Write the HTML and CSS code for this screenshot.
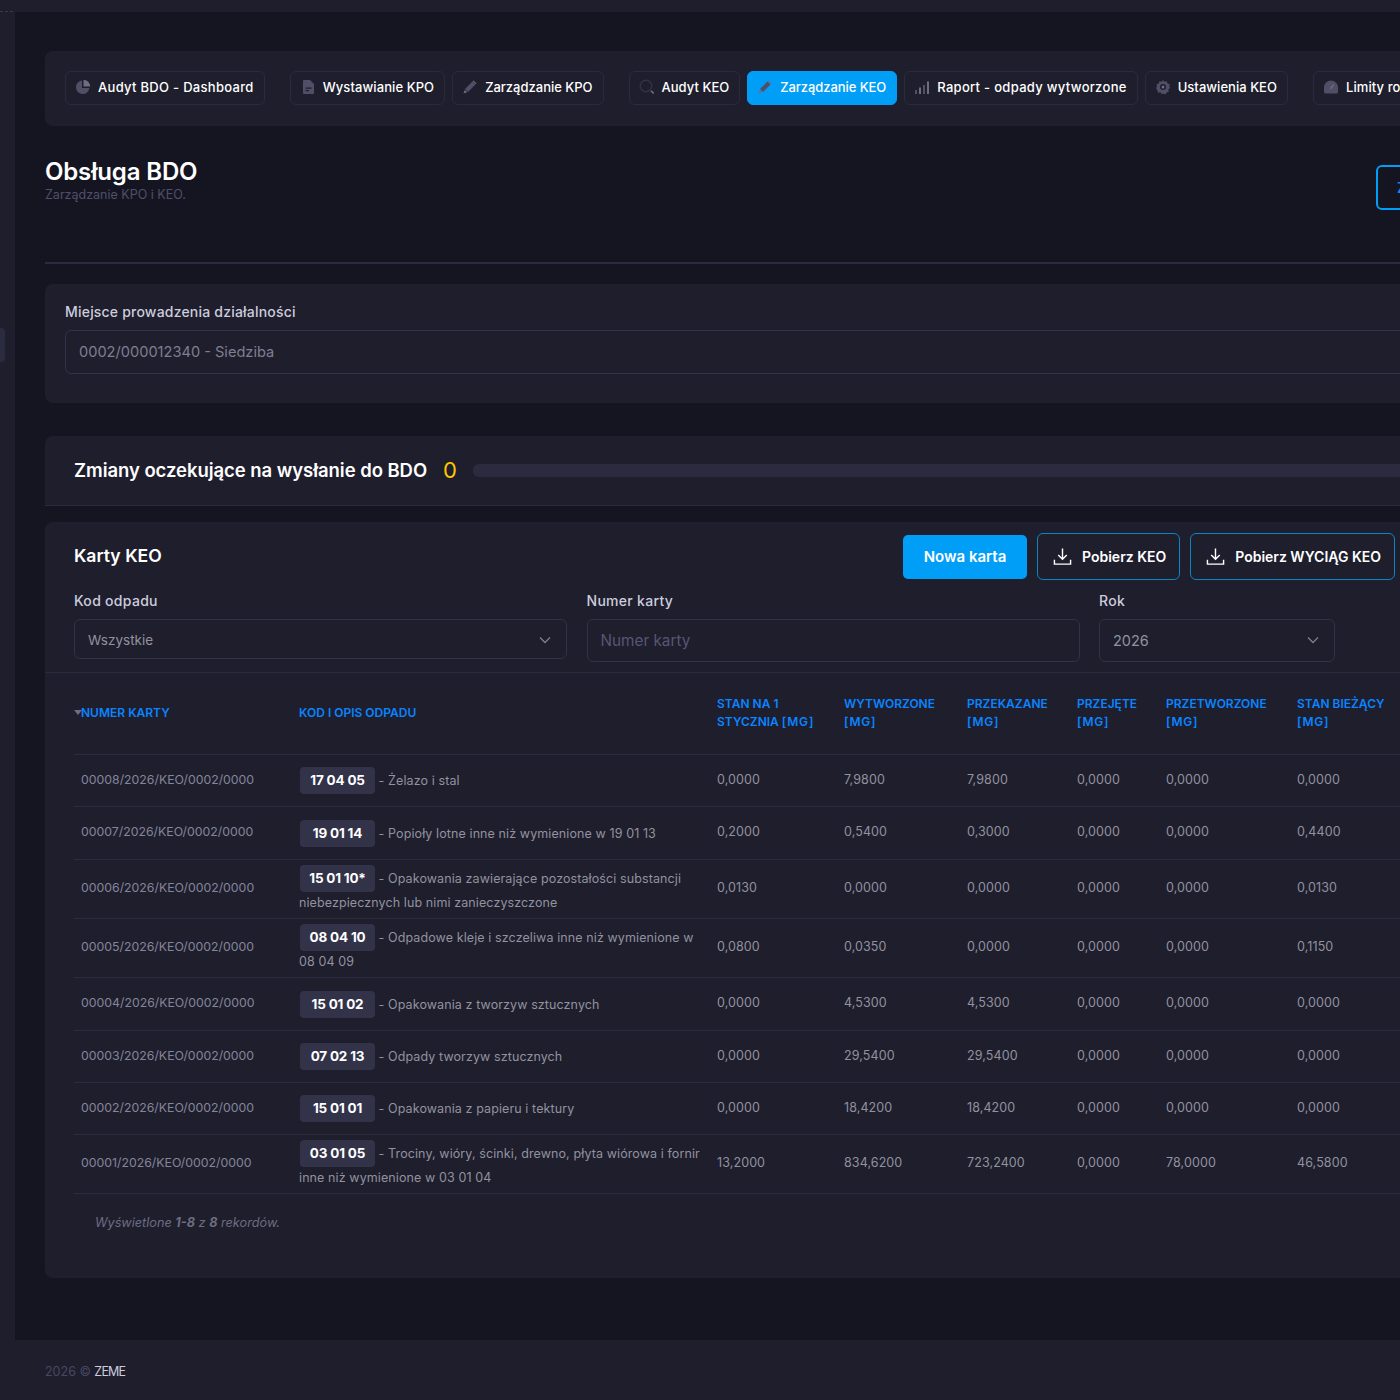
FILE: index.html
```html
<!DOCTYPE html>
<html lang="pl">
<head>
  <meta charset="UTF-8">
  <title>Obsługa BDO</title>
  <link rel="stylesheet" href="styles.css">
</head>
<body>
  <div class="topbar"><div class="topbar-dash"></div></div>
  <div class="layout">
    <aside class="sidebar"><div class="sidebar-tab"></div></aside>
    <div class="page">
      <main class="content">

        <!-- nav -->
        <nav class="nav-card">
          <a class="nav-btn wide">
            <svg class="ico" viewBox="0 0 16 16"><path d="M7 1.500a6.800 6.800 0 1 0 7.500 7.500H7z"/><path class="hi" d="M8.500 .8v6.700h6.700A6.800 6.800 0 0 0 8.500 .8z"/></svg>
            Audyt BDO - Dashboard
          </a>
          <a class="nav-btn gap-l">
            <svg class="ico" viewBox="0 0 16 16"><path d="M3 2a1 1 0 0 1 1-1h6l4 4v9a1 1 0 0 1-1 1H4a1 1 0 0 1-1-1z"/><path class="dk" d="M5.500 8.500h6v1.300h-6zM5.500 11h3.500v1.300h-3.500z"/></svg>
            Wystawianie KPO
          </a>
          <a class="nav-btn tight">
            <svg class="ico" viewBox="0 0 16 16"><path d="M10.500 2.500l3 3-7.500 7.500-3-3z"/><path class="hi" d="M11.500 1.500l3 3-.8.800-3-3zM2.800 10.800l2.400 2.400-3.700 1.300z"/></svg>
            Zarządzanie KPO
          </a>
          <a class="nav-btn gap-l snug">
            <svg class="ico" viewBox="0 0 16 16"><circle class="ring" cx="7" cy="7" r="5.800"/><path class="hi" d="M11.500 12.500l1.200-1.200 2.600 2.600-1.200 1.200z"/></svg>
            Audyt KEO
          </a>
          <a class="nav-btn active tight">
            <svg class="ico" viewBox="0 0 16 16"><path d="M10.500 2.500l3 3-7.500 7.500-3-3z"/><path class="hi" d="M11.500 1.500l3 3-.8.800-3-3zM2.800 10.800l2.400 2.400-3.700 1.300z"/></svg>
            Zarządzanie KEO
          </a>
          <a class="nav-btn wide">
            <svg class="ico" viewBox="0 0 16 16"><path d="M1 11h2v4H1zM9 6h2v9H9z"/><path class="hi" d="M5 8.500h2V15H5zM13 2.500h2V15h-2z"/></svg>
            Raport - odpady wytworzone
          </a>
          <a class="nav-btn snug">
            <svg class="ico" viewBox="0 0 16 16"><path d="M8 1l1.500 1.800 2.300-.5.700 2.300 2.300.7-.5 2.300L15 9l-1.700 1.500.5 2.300-2.300.7-.7 1.800-2.300-.5L6.900 15l-1.500-1.700-2.300.5-.7-2.300-1.400-2.500L2 7.600l-.5-2.300 2.300-.7.7-2.300 2.300.5z"/><circle class="dk" cx="8" cy="8" r="3"/><circle class="hi" cx="8" cy="8" r="1.500"/></svg>
            Ustawienia KEO
          </a>
          <a class="nav-btn gap-l">
            <svg class="ico" viewBox="0 0 16 16"><path d="M8 1.500a7 7 0 0 1 7 7V13a1.500 1.500 0 0 1-1.500 1.500h-11A1.500 1.500 0 0 1 1 13V8.500a7 7 0 0 1 7-7z"/><path class="hi" d="M10.200 5l.9.600-2.600 4.600-1.500-.9z"/></svg>
            Limity roczne
          </a>
        </nav>

        <!-- title -->
        <header class="page-head">
          <div>
            <h1>Obsługa BDO</h1>
            <p class="subtitle">Zarządzanie KPO i KEO.</p>
          </div>
          <button class="head-btn">Zmień</button>
        </header>
        <hr class="head-line">

        <section class="card place-card">
          <label class="field-label">Miejsce prowadzenia działalności</label>
          <div class="place-input">0002/000012340 - Siedziba</div>
        </section>

        <section class="card pending-card">
          <h2>Zmiany oczekujące na wysłanie do BDO</h2>
          <span class="pending-count">0</span>
          <div class="pending-bar"></div>
        </section>

        <section class="card keo-card">
          <div class="keo-head">
            <h3>Karty KEO</h3>
            <div class="keo-actions">
              <button class="btn-primary">Nowa karta</button>
              <button class="btn-outline">
                <svg class="dl" viewBox="0 0 20 20"><path d="M10 1.500v11.500M5.500 8.500l4.500 4.500 4.500-4.500M1.500 13.500v4.500h17v-4.500"/></svg>
                Pobierz KEO
              </button>
              <button class="btn-outline">
                <svg class="dl" viewBox="0 0 20 20"><path d="M10 1.500v11.500M5.500 8.500l4.500 4.500 4.500-4.500M1.500 13.500v4.500h17v-4.500"/></svg>
                Pobierz WYCIĄG KEO
              </button>
            </div>
          </div>

          <div class="filters">
            <div class="filter f-kod">
              <label>Kod odpadu</label>
              <div class="control short">Wszystkie
                <svg class="chev" viewBox="0 0 12 8"><path d="M1 1.500l5 5 5-5"/></svg>
              </div>
            </div>
            <div class="filter f-num">
              <label>Numer karty</label>
              <div class="control placeholder">Numer karty</div>
            </div>
            <div class="filter f-rok">
              <label>Rok</label>
              <div class="control year">2026
                <svg class="chev" viewBox="0 0 12 8"><path d="M1 1.500l5 5 5-5"/></svg>
              </div>
            </div>
          </div>

          <div class="table-wrap">
            <table class="keo-table">
              <colgroup>
                <col class="c1"><col class="c2"><col class="c3"><col class="c4"><col class="c5"><col class="c6"><col class="c7"><col class="c8">
              </colgroup>
              <thead>
                <tr>
                  <th class="first sorted">NUMER KARTY</th>
                  <th>KOD I OPIS ODPADU</th>
                  <th>STAN NA 1 STYCZNIA <span class="unit">[MG]</span></th>
                  <th>WYTWORZONE <span class="unit">[MG]</span></th>
                  <th>PRZEKAZANE <span class="unit">[MG]</span></th>
                  <th>PRZEJĘTE <span class="unit">[MG]</span></th>
                  <th>PRZETWORZONE <span class="unit">[MG]</span></th>
                  <th>STAN BIEŻĄCY <span class="unit">[MG]</span></th>
                </tr>
              </thead>
              <tbody>
                <tr>
                  <td class="first">00008/2026/KEO/0002/0000</td>
                  <td class="desc"><span class="code">17 04 05</span> - Żelazo i stal</td>
                  <td>0,0000</td><td>7,9800</td><td>7,9800</td><td>0,0000</td><td>0,0000</td><td>0,0000</td>
                </tr>
                <tr class="row-53">
                  <td class="first">00007/2026/KEO/0002/0000</td>
                  <td class="desc"><span class="code">19 01 14</span> - Popioły lotne inne niż wymienione w 19 01 13</td>
                  <td>0,2000</td><td>0,5400</td><td>0,3000</td><td>0,0000</td><td>0,0000</td><td>0,4400</td>
                </tr>
                <tr>
                  <td class="first">00006/2026/KEO/0002/0000</td>
                  <td class="desc"><span class="code">15 01 10*</span> - Opakowania zawierające pozostałości substancji niebezpiecznych lub nimi zanieczyszczone</td>
                  <td>0,0130</td><td>0,0000</td><td>0,0000</td><td>0,0000</td><td>0,0000</td><td>0,0130</td>
                </tr>
                <tr>
                  <td class="first">00005/2026/KEO/0002/0000</td>
                  <td class="desc"><span class="code">08 04 10</span> - Odpadowe kleje i szczeliwa inne niż wymienione w 08 04 09</td>
                  <td>0,0800</td><td>0,0350</td><td>0,0000</td><td>0,0000</td><td>0,0000</td><td>0,1150</td>
                </tr>
                <tr class="row-53">
                  <td class="first">00004/2026/KEO/0002/0000</td>
                  <td class="desc"><span class="code">15 01 02</span> - Opakowania z tworzyw sztucznych</td>
                  <td>0,0000</td><td>4,5300</td><td>4,5300</td><td>0,0000</td><td>0,0000</td><td>0,0000</td>
                </tr>
                <tr>
                  <td class="first">00003/2026/KEO/0002/0000</td>
                  <td class="desc"><span class="code">07 02 13</span> - Odpady tworzyw sztucznych</td>
                  <td>0,0000</td><td>29,5400</td><td>29,5400</td><td>0,0000</td><td>0,0000</td><td>0,0000</td>
                </tr>
                <tr>
                  <td class="first">00002/2026/KEO/0002/0000</td>
                  <td class="desc"><span class="code">15 01 01</span> - Opakowania z papieru i tektury</td>
                  <td>0,0000</td><td>18,4200</td><td>18,4200</td><td>0,0000</td><td>0,0000</td><td>0,0000</td>
                </tr>
                <tr>
                  <td class="first">00001/2026/KEO/0002/0000</td>
                  <td class="desc"><span class="code">03 01 05</span> - Trociny, wióry, ścinki, drewno, płyta wiórowa i fornir inne niż wymienione w 03 01 04</td>
                  <td>13,2000</td><td>834,6200</td><td>723,2400</td><td>0,0000</td><td>78,0000</td><td>46,5800</td>
                </tr>
              </tbody>
            </table>
          </div>
          <p class="summary">Wyświetlone <b>1-8</b> z <b>8</b> rekordów.</p>
        </section>
      </main>

      <footer class="footer">
        <span class="muted">2026 ©</span> <span class="brand">ZEME</span>
      </footer>
    </div>
  </div>
</body>
</html>
```

FILE: styles.css
```css
/* page */
html, body {
  margin: 0;
  padding: 0;
  height: 1400px;
  overflow: hidden;
  background-color: #151521;
  font-family: "Inter", "Noto Sans", sans-serif;
  color: #92929f;
}

.topbar {
  height: 12px;
  background-color: #1e1e2d;
}
.topbar-dash {
  width: 13px;
  height: 11px;
  border-bottom: 1px dashed #3a3a4d;
}

.layout {
  display: flex;
  width: 1560px;
  height: 1388px;
}

.sidebar {
  width: 15px;
  flex-shrink: 0;
  background-color: #1e1e2d;
  padding-top: 316px;
}
.sidebar-tab {
  width: 5px;
  height: 34px;
  background-color: #2b2b40;
  border-radius: 0 4px 4px 0;
}

.page {
  flex: 1;
  display: flex;
  flex-direction: column;
}
.content {
  flex: 1;
  padding: 39px 30px 0;
}

/* nav */
.nav-card {
  display: flex;
  align-items: flex-start;
  gap: 7px;
  height: 75px;
  box-sizing: border-box;
  padding: 20px 20px 0;
  background-color: #1e1e2d;
  border-radius: 8px;
  white-space: nowrap;
}
.nav-btn {
  display: flex;
  align-items: center;
  gap: 7px;
  height: 30px;
  padding: 0 10px 2px 9px;
  border: 1px solid #2b2b40;
  border-radius: 6px;
  font-size: 13px;
  font-weight: 500;
  letter-spacing: .08px;
  color: #fff;
}
.nav-btn.gap-l {
  margin-left: 18px;
}
.nav-btn.tight {
  letter-spacing: -.01px;
}
.nav-btn.snug {
  letter-spacing: .03px;
}
.nav-btn.wide {
  letter-spacing: .3px;
}
.nav-btn.active {
  background-color: #009ef7;
  border-color: #009ef7;
  letter-spacing: -.07px;
}
.ico {
  width: 16px;
  height: 16px;
  flex-shrink: 0;
  fill: #4f4f68;
}
.ico .hi { fill: #6d6d80; }
.ico .dk { fill: #1e1e2d; }
.ico .ring { fill: none; stroke: #323248; stroke-width: 1.4; }

/* title */
.page-head {
  display: flex;
  justify-content: space-between;
  height: 136px;
  padding-top: 31px;
  box-sizing: border-box;
}
.page-head h1 {
  margin: 0;
  font-size: 24px;
  line-height: 30px;
  font-weight: 600;
  letter-spacing: -.15px;
  color: #fff;
}
.subtitle {
  margin: 0;
  font-size: 12.500px;
  line-height: 16px;
  color: #4f4f6b;
}
.head-btn {
  width: 110px;
  height: 45px;
  margin: 8px 44px 0 0;
  background: none;
  border: 2px solid #009ef7;
  border-radius: 6px;
  color: #0a84ff;
  font: 600 14px "Inter", sans-serif;
  text-align: left;
  padding-left: 19px;
}
.head-line {
  margin: 0 0 20px;
  border: 0;
  height: 2px;
  background-color: #2b2b40;
}

/* cards */
.card {
  background-color: #1e1e2d;
  border-radius: 8px;
}
.place-card {
  height: 119px;
  box-sizing: border-box;
  padding: 19px 20px 0;
  margin-bottom: 33px;
}
.field-label {
  display: block;
  font-size: 14px;
  line-height: 18px;
  font-weight: 500;
  letter-spacing: .2px;
  color: #cdcdde;
}
.place-input {
  margin-top: 9px;
  height: 42px;
  line-height: 42px;
  padding-left: 13px;
  border: 1px solid #323248;
  border-radius: 6px;
  font-size: 14.600px;
  color: #7e7e90;
}

.pending-card {
  display: flex;
  align-items: center;
  height: 70px;
  box-sizing: border-box;
  padding: 0 29px;
  border-bottom: 1px solid #2b2b40;
  border-radius: 8px 8px 0 0;
  margin-bottom: 16px;
}
.pending-card h2 {
  margin: 0 0 2px;
  font-size: 18.500px;
  font-weight: 600;
  letter-spacing: -.05px;
  color: #fff;
}
.pending-count {
  margin: 0 0 2px 16px;
  font-size: 22px;
  color: #ffc700;
}
.pending-bar {
  flex: 1;
  height: 13px;
  margin-left: 16px;
  background-color: #2b2b40;
  border-radius: 6px;
}

/* karty keo */
.keo-card {
  height: 756px;
  box-sizing: border-box;
}
.keo-head {
  display: flex;
  align-items: center;
  padding: 11px 0 0 29px;
  width: 1350px;
  box-sizing: border-box;
}
.keo-head h3 {
  margin: 0 0 2px;
  font-size: 17.600px;
  font-weight: 600;
  color: #fff;
}
.keo-actions {
  margin-left: auto;
  display: flex;
  align-items: center;
  gap: 10px;
}
.btn-primary {
  width: 124px;
  height: 44px;
  border: 0;
  border-radius: 5px;
  background-color: #009ef7;
  color: #fff;
  font: 600 15px "Inter", sans-serif;
}
.btn-outline {
  display: flex;
  align-items: center;
  gap: 10px;
  height: 47px;
  padding: 0 13px 0 15px;
  background: none;
  border: 1px solid #0d84c4;
  border-radius: 6px;
  color: #fff;
  font: 600 14px "Inter", sans-serif;
}
.dl {
  width: 19px;
  height: 19px;
  fill: none;
  stroke: #fff;
  stroke-width: 1.500;
}

.filters {
  display: flex;
  gap: 19.500px;
  padding: 11px 0 0 29px;
  height: 93px;
  box-sizing: border-box;
  border-bottom: 1px solid #2b2b40;
}
.filter label {
  display: block;
  font-size: 14px;
  line-height: 20px;
  font-weight: 500;
  letter-spacing: .3px;
  color: #cdcdde;
  margin-bottom: 8px;
}
.f-kod { width: 493px; }
.f-num { width: 493px; }
.f-rok { width: 236px; }
.control {
  display: flex;
  align-items: center;
  justify-content: space-between;
  height: 41px;
  padding: 0 15px 0 13px;
  border: 1px solid #323248;
  border-radius: 6px;
  font-size: 14.500px;
  color: #92929f;
}
.control.short {
  height: 37px;
  padding-top: 1px;
  font-size: 13.500px;
}
.control.year {
  height: 40px;
  padding-bottom: 1px;
}
.control.placeholder {
  color: #565674;
  font-size: 15.300px;
}
.chev {
  width: 12px;
  height: 8px;
  fill: none;
  stroke: #7e7e90;
  stroke-width: 1.300;
}

/* table */
.table-wrap {
  padding-left: 29px;
}
.keo-table {
  border-collapse: collapse;
  table-layout: fixed;
  width: 1340px;
  font-size: 12.500px;
}
.c1 { width: 225px; }
.c2 { width: 418px; }
.c3 { width: 127px; }
.c4 { width: 123px; }
.c5 { width: 110px; }
.c6 { width: 89px; }
.c7 { width: 131px; }
.c8 { width: 117px; }
.keo-table th {
  height: 81px;
  padding: 0 14px 0 0;
  box-sizing: border-box;
  text-align: left;
  vertical-align: middle;
  font-size: 12px;
  line-height: 18px;
  font-weight: 600;
  color: #0a84ff;
  border-bottom: 1px solid #2b2b40;
}
.unit {
  letter-spacing: .8px;
}
.keo-table td {
  height: 52px;
  padding: 0 14px 2px 0;
  box-sizing: border-box;
  color: #92929f;
  border-bottom: 1px solid #2b2b40;
  letter-spacing: .1px;
}
.keo-table .row-53 td {
  height: 53px;
}
.keo-table td.first {
  padding-left: 7px;
  font-size: 12.300px;
  letter-spacing: 0;
  color: #85859a;
}
.keo-table th.first {
  padding-left: 7px;
}
.sorted {
  position: relative;
}
.sorted::before {
  content: "";
  position: absolute;
  left: 0;
  top: 37px;
  border-left: 4px solid transparent;
  border-right: 4px solid transparent;
  border-top: 5px solid #6d6d80;
}
.keo-table td.desc {
  padding-top: 5px;
  padding-bottom: 4px;
  line-height: 22px;
}
.code {
  display: inline-block;
  width: 75px;
  height: 27px;
  margin-left: 1px;
  line-height: 27px;
  text-align: center;
  background-color: #323248;
  border-radius: 4px;
  font-size: 13.500px;
  font-weight: 700;
  color: #fff;
  letter-spacing: -.2px;
}
.summary {
  margin: 21px 0 0 50px;
  font-size: 12.700px;
  font-style: italic;
  color: #6d6d80;
}

/* footer */
.footer {
  height: 60px;
  line-height: 63px;
  padding-left: 30px;
  background-color: #1e1e2d;
  font-size: 12.500px;
}
.footer .muted { color: #474761; }
.footer .brand {
  color: #cdcdde;
  letter-spacing: -.8px;
}
```
